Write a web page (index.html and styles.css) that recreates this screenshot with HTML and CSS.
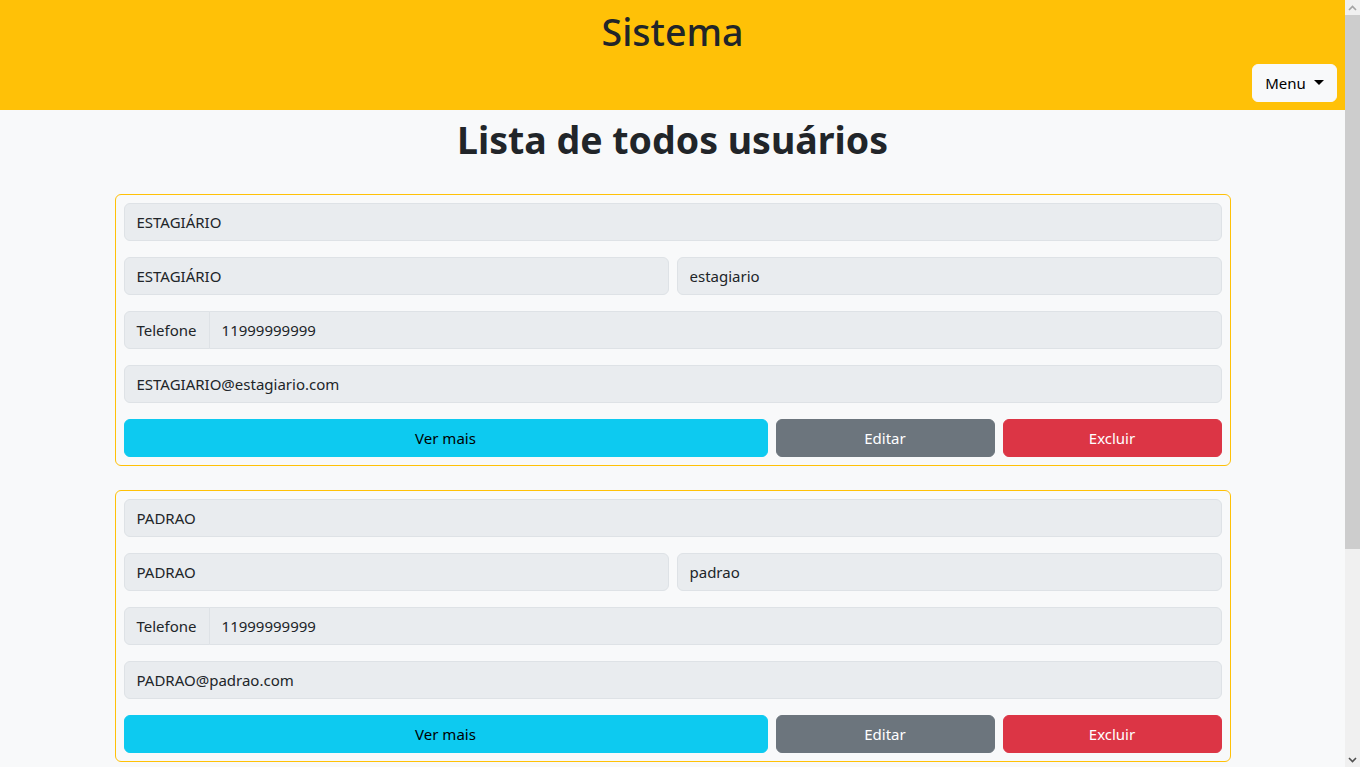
FILE: index.html
```html
<!DOCTYPE html>
<html lang="pt-BR">
<head>
<meta charset="utf-8">
<title>Sistema - Lista de todos usuários</title>
<link rel="stylesheet" href="styles.css">
</head>
<body>
<header class="topbar">
  <h1 class="brand">Sistema</h1>
  <div class="topbar-actions">
    <button class="btn btn-light menu-btn" type="button">Menu<span class="caret"></span></button>
  </div>
</header>
<main class="container">
  <h1 class="page-title">Lista de todos usuários</h1>

  <section class="user-card">
    <input class="field" readonly value="ESTAGIÁRIO">
    <div class="pair">
      <input class="field" readonly value="ESTAGIÁRIO">
      <input class="field" readonly value="estagiario">
    </div>
    <div class="input-group">
      <span class="addon">Telefone</span>
      <input class="field joined" readonly value="11999999999">
    </div>
    <input class="field" readonly value="ESTAGIARIO@estagiario.com">
    <div class="actions">
      <button class="btn btn-info" type="button">Ver mais</button>
      <button class="btn btn-secondary" type="button">Editar</button>
      <button class="btn btn-danger" type="button">Excluir</button>
    </div>
  </section>

  <section class="user-card">
    <input class="field" readonly value="PADRAO">
    <div class="pair">
      <input class="field" readonly value="PADRAO">
      <input class="field" readonly value="padrao">
    </div>
    <div class="input-group">
      <span class="addon">Telefone</span>
      <input class="field joined" readonly value="11999999999">
    </div>
    <input class="field" readonly value="PADRAO@padrao.com">
    <div class="actions">
      <button class="btn btn-info" type="button">Ver mais</button>
      <button class="btn btn-secondary" type="button">Editar</button>
      <button class="btn btn-danger" type="button">Excluir</button>
    </div>
  </section>

  <section class="user-card">
    <input class="field" readonly value="ADMINISTRADOR">
    <div class="pair">
      <input class="field" readonly value="ADMINISTRADOR">
      <input class="field" readonly value="admin">
    </div>
    <div class="input-group">
      <span class="addon">Telefone</span>
      <input class="field joined" readonly value="11999999999">
    </div>
    <input class="field" readonly value="ADMIN@admin.com">
    <div class="actions">
      <button class="btn btn-info" type="button">Ver mais</button>
      <button class="btn btn-secondary" type="button">Editar</button>
      <button class="btn btn-danger" type="button">Excluir</button>
    </div>
  </section>
</main>

<div class="scrollbar" aria-hidden="true">
  <div class="scroll-btn">
    <svg width="9" height="6" viewBox="0 0 9 6"><path d="M1 5 L4.5 1.5 L8 5" fill="none" stroke="#a3a3a3" stroke-width="1.6"/></svg>
  </div>
  <div class="scroll-track">
    <div class="scroll-thumb"></div>
  </div>
  <div class="scroll-btn">
    <svg width="9" height="6" viewBox="0 0 9 6"><path d="M1 1 L4.5 4.5 L8 1" fill="none" stroke="#505050" stroke-width="1.6"/></svg>
  </div>
</div>
</body>
</html>
```

FILE: styles.css
```css
* { box-sizing: border-box; }

html, body {
  margin: 0;
  padding: 0;
}

::-webkit-scrollbar {
  width: 0;
  height: 0;
}

body {
  margin-right: 15px;
  background: #f8f9fa;
  color: #212529;
  font-family: "Noto Sans", "Open Sans", sans-serif;
  font-size: 15px;
  line-height: 1.5;
}

/* imitation of the window's classic scrollbar, drawn over the right edge */
.scrollbar {
  position: fixed;
  top: 0;
  right: 0;
  bottom: 0;
  width: 15px;
  display: flex;
  flex-direction: column;
  background: #f0f0f0;
}

.scroll-btn {
  height: 15px;
  display: flex;
  align-items: center;
  justify-content: center;
  flex: none;
}

.scroll-track {
  flex: 1;
}

.scroll-thumb {
  height: 534px;
  background: #cdcdcd;
}

.topbar {
  background: #ffc107;
  padding: 8px;
  display: flex;
  flex-direction: column;
}

.brand {
  margin: 0 0 8px;
  text-align: center;
  font-size: 37.5px;
  font-weight: 500;
  line-height: 48px;
  color: #212529;
}

.topbar-actions {
  display: flex;
  justify-content: flex-end;
}

.btn {
  display: inline-flex;
  align-items: center;
  justify-content: center;
  height: 38px;
  padding: 6px 12px;
  border: 1px solid transparent;
  border-radius: 6px;
  font-family: inherit;
  font-size: 15px;
  line-height: 24px;
  cursor: pointer;
}

.btn-light {
  background: #f8f9fa;
  border-color: #f8f9fa;
  color: #000;
}

.menu-btn {
  width: 85px;
}

.caret {
  display: inline-block;
  margin-left: 8px;
  width: 0;
  height: 0;
  border-top: 5px solid #000;
  border-left: 5px solid transparent;
  border-right: 5px solid transparent;
  transform: translateY(-1px);
}

.container {
  width: 1140px;
  margin: 0 auto;
  padding: 0 12px;
}

.page-title {
  margin: 6px 0 30px;
  text-align: center;
  font-size: 37.5px;
  font-weight: 700;
  line-height: 48px;
}

.user-card {
  border: 1px solid #ffc107;
  border-radius: 6px;
  padding: 8px;
  display: grid;
  gap: 16px;
  margin-bottom: 24px;
}

.user-card:last-child {
  margin-bottom: 0;
}

.field {
  display: block;
  width: 100%;
  height: 38px;
  padding: 6px 12px;
  background: #e9ecef;
  border: 1px solid #dee2e6;
  border-radius: 6px;
  color: #212529;
  font-family: inherit;
  font-size: 15px;
  line-height: 24px;
  outline: none;
}

.pair {
  display: grid;
  grid-template-columns: 1fr 1fr;
  gap: 8px;
}

.input-group {
  display: flex;
}

.addon {
  display: flex;
  align-items: center;
  height: 38px;
  padding: 6px 12px;
  background: #e9ecef;
  border: 1px solid #dee2e6;
  border-radius: 6px 0 0 6px;
  white-space: nowrap;
}

.field.joined {
  flex: 1;
  margin-left: -1px;
  border-radius: 0 6px 6px 0;
}

.actions {
  display: grid;
  grid-template-columns: 644fr 219fr 219fr;
  gap: 8px;
}

.btn-info {
  background: #0dcaf0;
  border-color: #0dcaf0;
  color: #000;
}

.btn-secondary {
  background: #6c757d;
  border-color: #6c757d;
  color: #fff;
}

.btn-danger {
  background: #dc3545;
  border-color: #dc3545;
  color: #fff;
}
```
